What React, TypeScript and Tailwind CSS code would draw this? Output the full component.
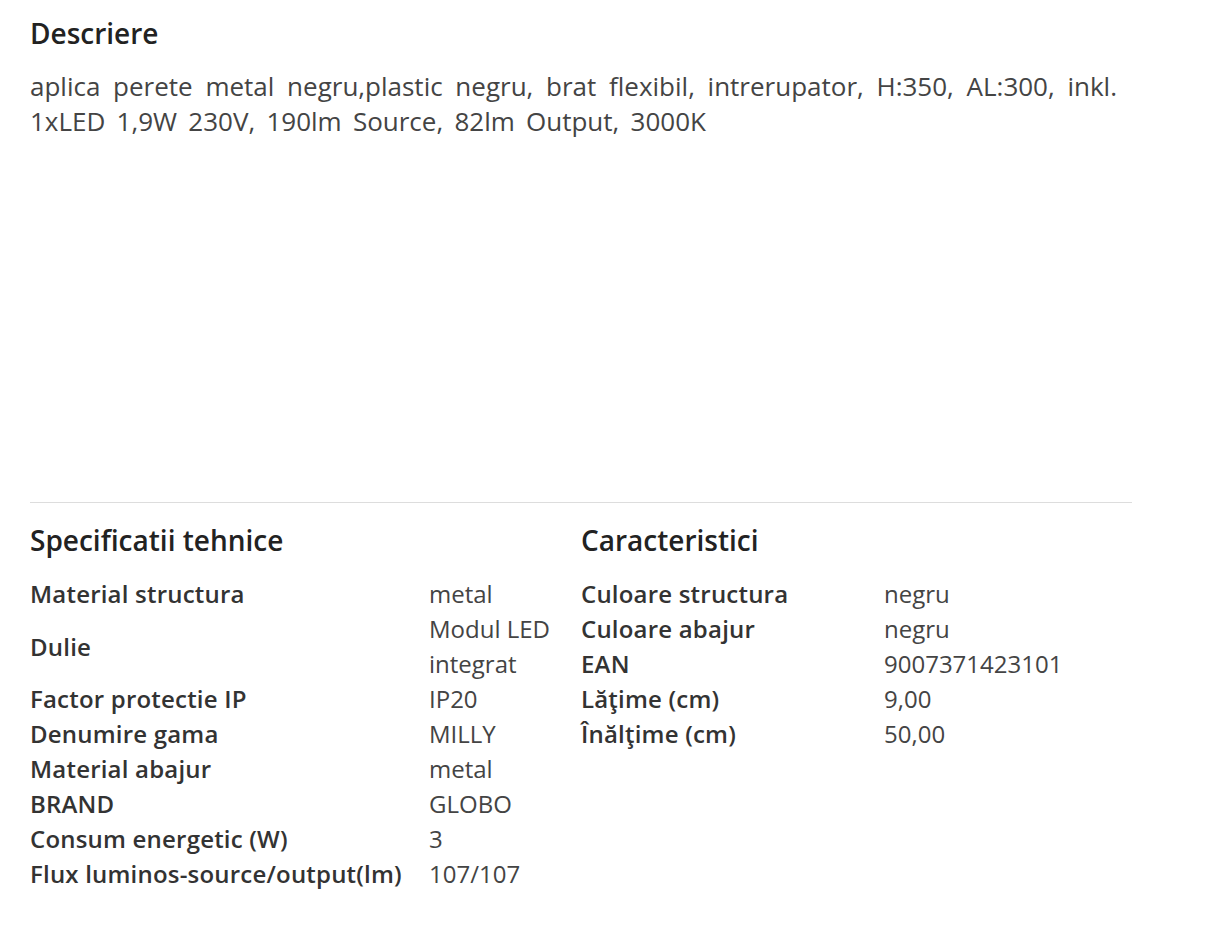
const specs: [string, string][] = [
  ["Material structura", "metal"],
  ["Dulie", "Modul LED integrat"],
  ["Factor protectie IP", "IP20"],
  ["Denumire gama", "MILLY"],
  ["Material abajur", "metal"],
  ["BRAND", "GLOBO"],
  ["Consum energetic (W)", "3"],
  ["Flux luminos-source/output(lm)", "107/107"],
];

const features: [string, string][] = [
  ["Culoare structura", "negru"],
  ["Culoare abajur", "negru"],
  ["EAN", "9007371423101"],
  ["Lăţime (cm)", "9,00"],
  ["Înălţime (cm)", "50,00"],
];

function SpecTable({ title, rows, labelWidth }: { title: string; rows: [string, string][]; labelWidth: string }) {
  return (
    <div className="pt-[19px]">
      <h3 className="text-[28px] leading-[36px] font-semibold text-[#222]">{title}</h3>
      <table className="mt-[18px] table-fixed w-full border-collapse">
        <colgroup>
          <col className={labelWidth} />
          <col />
        </colgroup>
        <tbody>
          {rows.map(([label, value]) => (
            <tr key={label}>
              <td className="p-0 align-middle text-[24px] leading-[35px] font-semibold tracking-[0.2px] text-[#333] whitespace-nowrap">{label}</td>
              <td className="p-0 pr-[14px] align-middle text-[24px] leading-[35px] text-[#444]">{value}</td>
            </tr>
          ))}
        </tbody>
      </table>
    </div>
  );
}

export default function App() {
  return (
    <div className="min-h-screen bg-white px-[30px] pt-[15px] font-['Open_Sans',sans-serif]">
      {/* Descriere */}
      <h2 className="text-[28px] leading-[36px] font-semibold text-[#222]">Descriere</h2>
      <p className="mt-[18px] w-[1087px] text-justify text-[26px] leading-[35px] [word-spacing:4.5px] text-[#444]">
        aplica perete metal negru,plastic negru, brat flexibil, intrerupator, H:350, AL:300, inkl. 1xLED 1,9W 230V, 190lm Source, 82lm Output, 3000K
      </p>

      {/* Specificatii */}
      <div className="mt-[363px] w-[1102px] border-t border-[#dddddd] grid grid-cols-2">
        <SpecTable title="Specificatii tehnice" rows={specs} labelWidth="w-[399px]" />
        <SpecTable title="Caracteristici" rows={features} labelWidth="w-[303px]" />
      </div>
    </div>
  );
}
